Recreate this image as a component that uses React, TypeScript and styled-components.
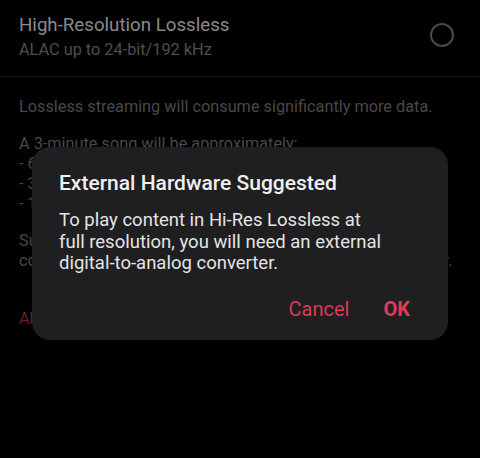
import React from "react";
import styled, { createGlobalStyle } from "styled-components";

const Global = createGlobalStyle`
  html, body {
    margin: 0;
    padding: 0;
    background: #000;
  }
  body {
    font-family: Roboto, "Noto Sans", "Liberation Sans", sans-serif;
    -webkit-font-smoothing: antialiased;
  }
`;

const Screen = styled.div`
  position: relative;
  width: 480px;
  height: 458px;
  background: #000;
  overflow: hidden;
`;

const OptionRow = styled.div`
  display: flex;
  align-items: flex-start;
  justify-content: space-between;
  padding: 13px 26px 0 19px;
  height: 77px;
  box-sizing: border-box;
  border-bottom: 1px solid #161616;
`;

const OptionText = styled.div`
  display: flex;
  flex-direction: column;
  gap: 2px;
`;

const OptionTitle = styled.div`
  font-size: 18.7px;
  line-height: 24px;
  color: #8a8a8a;
`;

const OptionSub = styled.div`
  font-size: 16.3px;
  line-height: 22px;
  color: #4e4e4e;
`;

const Radio = styled.div`
  width: 20px;
  height: 20px;
  margin-top: 10px;
  border-radius: 50%;
  border: 2px solid #4a4a4a;
`;

const Notes = styled.div`
  padding: 20px 19px 0 19px;
  display: flex;
  flex-direction: column;
  gap: 17px;
`;

const Para = styled.p<{ $link?: boolean }>`
  margin: ${(p) => (p.$link ? "21px 0 0 0" : "0")};
  font-size: 16.3px;
  line-height: 20px;
  color: ${(p) => (p.$link ? "#6e1b2b" : "#484848")};
  white-space: pre;
`;

const Scrim = styled.div`
  position: absolute;
  inset: 0;
  display: flex;
  align-items: flex-start;
  justify-content: center;
  padding-top: 147px;
`;

const Dialog = styled.div`
  width: 416px;
  box-sizing: border-box;
  background: #1f1f21;
  border-radius: 18px;
  padding: 23px 27px 19px 27px;
  display: flex;
  flex-direction: column;
`;

const DialogTitle = styled.h2`
  margin: 0;
  font-size: 21px;
  line-height: 27px;
  font-weight: 500;
  color: #f0f0f0;
`;

const DialogBody = styled.p`
  margin: 13px 0 0 0;
  font-size: 18.5px;
  line-height: 21.5px;
  color: #e4e4e4;
`;

const Actions = styled.div`
  display: flex;
  justify-content: flex-end;
  gap: 34px;
  margin-top: 22px;
  padding-right: 11px;
`;

const ActionButton = styled.button<{ $primary?: boolean }>`
  background: none;
  border: none;
  padding: 0;
  font-family: inherit;
  font-size: 20px;
  line-height: 24px;
  font-weight: ${(p) => (p.$primary ? 700 : 400)};
  color: ${(p) => (p.$primary ? "#e8385a" : "#d93a56")};
  cursor: pointer;
`;

export default function App() {
  return (
    <Screen>
      <Global />
      <OptionRow>
        <OptionText>
          <OptionTitle>High-Resolution Lossless</OptionTitle>
          <OptionSub>ALAC up to 24-bit/192 kHz</OptionSub>
        </OptionText>
        <Radio />
      </OptionRow>
      <Notes>
        <Para>Lossless streaming will consume significantly more data.</Para>
        <Para>
          {"A 3-minute song will be approximately:\n- 6 MB at High Quality\n- 36 MB at Lossless\n- 145 MB at Hi-Res Lossless"}
        </Para>
        <Para>
          {"Support for lossless varies by song and network\nconnection, and can require compatible, external audio gear."}
        </Para>
        <Para $link>About Lossless Audio</Para>
      </Notes>
      <Scrim>
        <Dialog>
          <DialogTitle>External Hardware Suggested</DialogTitle>
          <DialogBody>
            To play content in Hi-Res Lossless at
            <br />
            full resolution, you will need an external
            <br />
            digital-to-analog converter.
          </DialogBody>
          <Actions>
            <ActionButton>Cancel</ActionButton>
            <ActionButton $primary>OK</ActionButton>
          </Actions>
        </Dialog>
      </Scrim>
    </Screen>
  );
}
